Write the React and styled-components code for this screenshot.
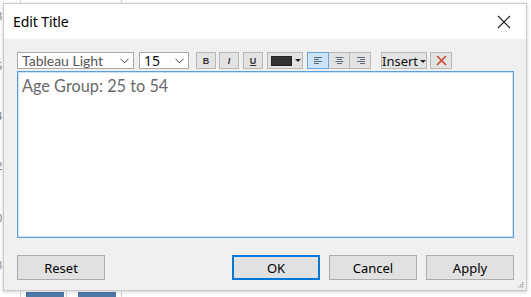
import styled, { createGlobalStyle } from "styled-components";

const GlobalStyle = createGlobalStyle`
  html, body {
    margin: 0;
    padding: 0;
    background: #ffffff;
  }
  body {
    font-family: "Noto Sans", "Open Sans", sans-serif;
  }
`;

const Page = styled.div`
  position: relative;
  width: 531px;
  height: 297px;
  overflow: hidden;
  background: #fff;
`;

const Chart = styled.svg`
  position: absolute;
  left: 0;
  top: 0;
`;

const Dialog = styled.div`
  position: relative;
  margin: 3px 0 0 3px;
  width: 522px;
  height: 286px;
  border: 1px solid #c9c9c9;
  background: #f0f0f0;
  box-shadow: 0 1px 4px rgba(0, 0, 0, 0.18);
  display: flex;
  flex-direction: column;
`;

const TitleBar = styled.div`
  height: 35px;
  background: #fff;
  display: flex;
  align-items: center;
  justify-content: space-between;
  padding: 0 15px 0 9px;
  flex-shrink: 0;
`;

const Title = styled.span`
  font-family: "Noto Sans", sans-serif;
  font-size: 14px;
  color: #000;
  letter-spacing: -0.1px;
  margin-top: -1px;
`;

const CloseButton = styled.button`
  border: none;
  background: none;
  padding: 0;
  width: 14px;
  height: 14px;
  display: flex;
`;

const Body = styled.div`
  flex: 1;
  padding: 13px 12px 10px 13px;
  display: flex;
  flex-direction: column;
`;

const Toolbar = styled.div`
  display: flex;
  align-items: center;
  height: 17px;
`;

const Select = styled.div`
  width: ${(p) => p.$w}px;
  height: 17px;
  box-sizing: border-box;
  margin-right: ${(p) => p.$mr || 0}px;
  border: 1px solid #a9a9a9;
  background: #fff;
  display: flex;
  align-items: center;
  justify-content: space-between;
  padding: 0 4px 0 4px;
  font-family: ${(p) => (p.$light ? `"Lato", "Noto Sans", sans-serif` : `"Noto Sans", sans-serif`)};
  font-size: 14px;
  color: ${(p) => (p.$light ? "#555" : "#111")};
  line-height: 1;
`;

const ToolButton = styled.div`
  width: ${(p) => p.$w || 20}px;
  height: 17px;
  box-sizing: border-box;
  margin-right: ${(p) => p.$mr || 0}px;
  border: 1px solid ${(p) => (p.$active ? "#6aa7e0" : "#b8b8b8")};
  background: ${(p) => (p.$active ? "#cde4f7" : "#e3e3e3")};
  display: flex;
  align-items: center;
  justify-content: center;
  font-family: "Liberation Sans", sans-serif;
  font-size: 9px;
  color: #333;
`;

const StyleButton = styled(ToolButton)`
  font-weight: 700;
  font-style: ${(p) => (p.$italic ? "italic" : "normal")};
  text-decoration: ${(p) => (p.$underline ? "underline" : "none")};
`;

const ColorButton = styled(ToolButton)`
  width: 36px;
  gap: 3px;
  justify-content: flex-start;
  padding-left: 3px;
`;

const AlignGroup = styled.div`
  display: flex;
  margin-right: 10px;
`;

const AlignButton = styled(ToolButton)`
  width: 22px;
  margin-right: 0;
  & + & {
    border-left: none;
    width: 21px;
  }
`;

const InsertButton = styled(ToolButton)`
  width: 46px;
  font-family: "Noto Sans", sans-serif;
  font-size: 13px;
  color: #111;
  gap: 2px;
  padding-top: 1px;
`;

const Swatch = styled.span`
  width: 21px;
  height: 10px;
  background: #333;
  border: 1px solid #222;
  box-sizing: border-box;
`;

const Caret = styled.span`
  width: 0;
  height: 0;
  border-left: 3px solid transparent;
  border-right: 3px solid transparent;
  border-top: 3px solid #222;
`;

const Editor = styled.div`
  margin-top: 2px;
  height: 167px;
  box-sizing: border-box;
  border: 1px solid #5d9fe0;
  box-shadow: inset 0 0 0 1px #cde2f6;
  background: #fff;
  padding: 4px 4px;
  font-family: "Lato", "Open Sans", sans-serif;
  font-size: 16.3px;
  color: #6a6a6a;
`;

const Footer = styled.div`
  margin-top: 17px;
  display: flex;
  justify-content: space-between;
`;

const ButtonGroup = styled.div`
  display: flex;
  gap: 9px;
`;

const Button = styled.button`
  width: 88px;
  height: 25px;
  box-sizing: border-box;
  border: 1px solid ${(p) => (p.$primary ? "#0078d7" : "#adadad")};
  box-shadow: ${(p) => (p.$primary ? "inset 0 0 0 1px #0078d7" : "none")};
  background: #e1e1e1;
  font-family: "Noto Sans", sans-serif;
  font-size: 13px;
  color: #000;
  padding: 0;
`;

const Grip = styled.svg`
  position: absolute;
  right: 2px;
  bottom: 2px;
`;

const AlignIcon = ({ type }) => {
  const widths = [8, 5, 8, 5];
  return (
    <svg width="9" height="8" viewBox="0 0 9 8">
      {widths.map((w, i) => {
        const x = type === "left" ? 0 : type === "center" ? (9 - w) / 2 : 9 - w;
        return <rect key={i} x={x} y={i * 2} width={w} height="1" fill="#5a6b7c" />;
      })}
    </svg>
  );
};

const Chevron = () => (
  <svg width="9" height="6" viewBox="0 0 9 6">
    <path d="M0.5 0.8 L4.5 4.8 L8.5 0.8" fill="none" stroke="#444" strokeWidth="1" />
  </svg>
);

export default function App() {
  return (
    <>
      <GlobalStyle />
      <Page>
        <Chart width="531" height="297">
          <line x1="20.5" y1="0" x2="20.5" y2="297" stroke="#d8d8d8" />
          <line x1="121.5" y1="0" x2="121.5" y2="297" stroke="#d8d8d8" />
          <line x1="66.5" y1="290" x2="66.5" y2="297" stroke="#d8d8d8" />
          <rect x="26" y="292" width="38" height="5" fill="#4e79a7" />
          <rect x="78" y="292" width="38" height="5" fill="#4e79a7" />
          {[
            ["3", 20],
            ["5", 70],
            ["4", 120],
            ["2", 170],
            ["0", 222],
            ["3", 269],
          ].map(([t, y], i) => (
            <text key={i} x="-4" y={y} fontSize="11" fill="#888" fontFamily="Noto Sans">
              {t}
            </text>
          ))}
        </Chart>
        <Dialog>
          <TitleBar>
            <Title>Edit Title</Title>
            <CloseButton>
              <svg width="14" height="14" viewBox="0 0 14 14">
                <path d="M1 1 L13 13 M13 1 L1 13" stroke="#222" strokeWidth="1.1" />
              </svg>
            </CloseButton>
          </TitleBar>
          <Body>
            <Toolbar>
              <Select $w={117} $mr={5} $light>
                <span>Tableau Light</span>
                <Chevron />
              </Select>
              <Select $w={50} $mr={7}>
                <span>15</span>
                <Chevron />
              </Select>
              <StyleButton $mr={3}>B</StyleButton>
              <StyleButton $mr={4} $italic>I</StyleButton>
              <StyleButton $mr={4} $underline>U</StyleButton>
              <ColorButton $mr={4}>
                <Swatch />
                <Caret />
              </ColorButton>
              <AlignGroup>
                <AlignButton $active>
                  <AlignIcon type="left" />
                </AlignButton>
                <AlignButton>
                  <AlignIcon type="center" />
                </AlignButton>
                <AlignButton>
                  <AlignIcon type="right" />
                </AlignButton>
              </AlignGroup>
              <InsertButton $mr={3}>
                <span>Insert</span>
                <Caret />
              </InsertButton>
              <ToolButton $w={22}>
                <svg width="11" height="11" viewBox="0 0 11 11">
                  <path d="M1 1 L10 10 M10 1 L1 10" stroke="#d0462e" strokeWidth="1.6" />
                </svg>
              </ToolButton>
            </Toolbar>
            <Editor>Age Group: 25 to 54</Editor>
            <Footer>
              <Button>Reset</Button>
              <ButtonGroup>
                <Button $primary>OK</Button>
                <Button>Cancel</Button>
                <Button>Apply</Button>
              </ButtonGroup>
            </Footer>
          </Body>
          <Grip width="6" height="6" viewBox="0 0 6 6">
            {[
              [4, 0],
              [2, 2],
              [4, 2],
              [0, 4],
              [2, 4],
              [4, 4],
            ].map(([x, y], i) => (
              <rect key={i} x={x} y={y} width="1.5" height="1.5" fill="#b0b0b0" />
            ))}
          </Grip>
        </Dialog>
      </Page>
    </>
  );
}
